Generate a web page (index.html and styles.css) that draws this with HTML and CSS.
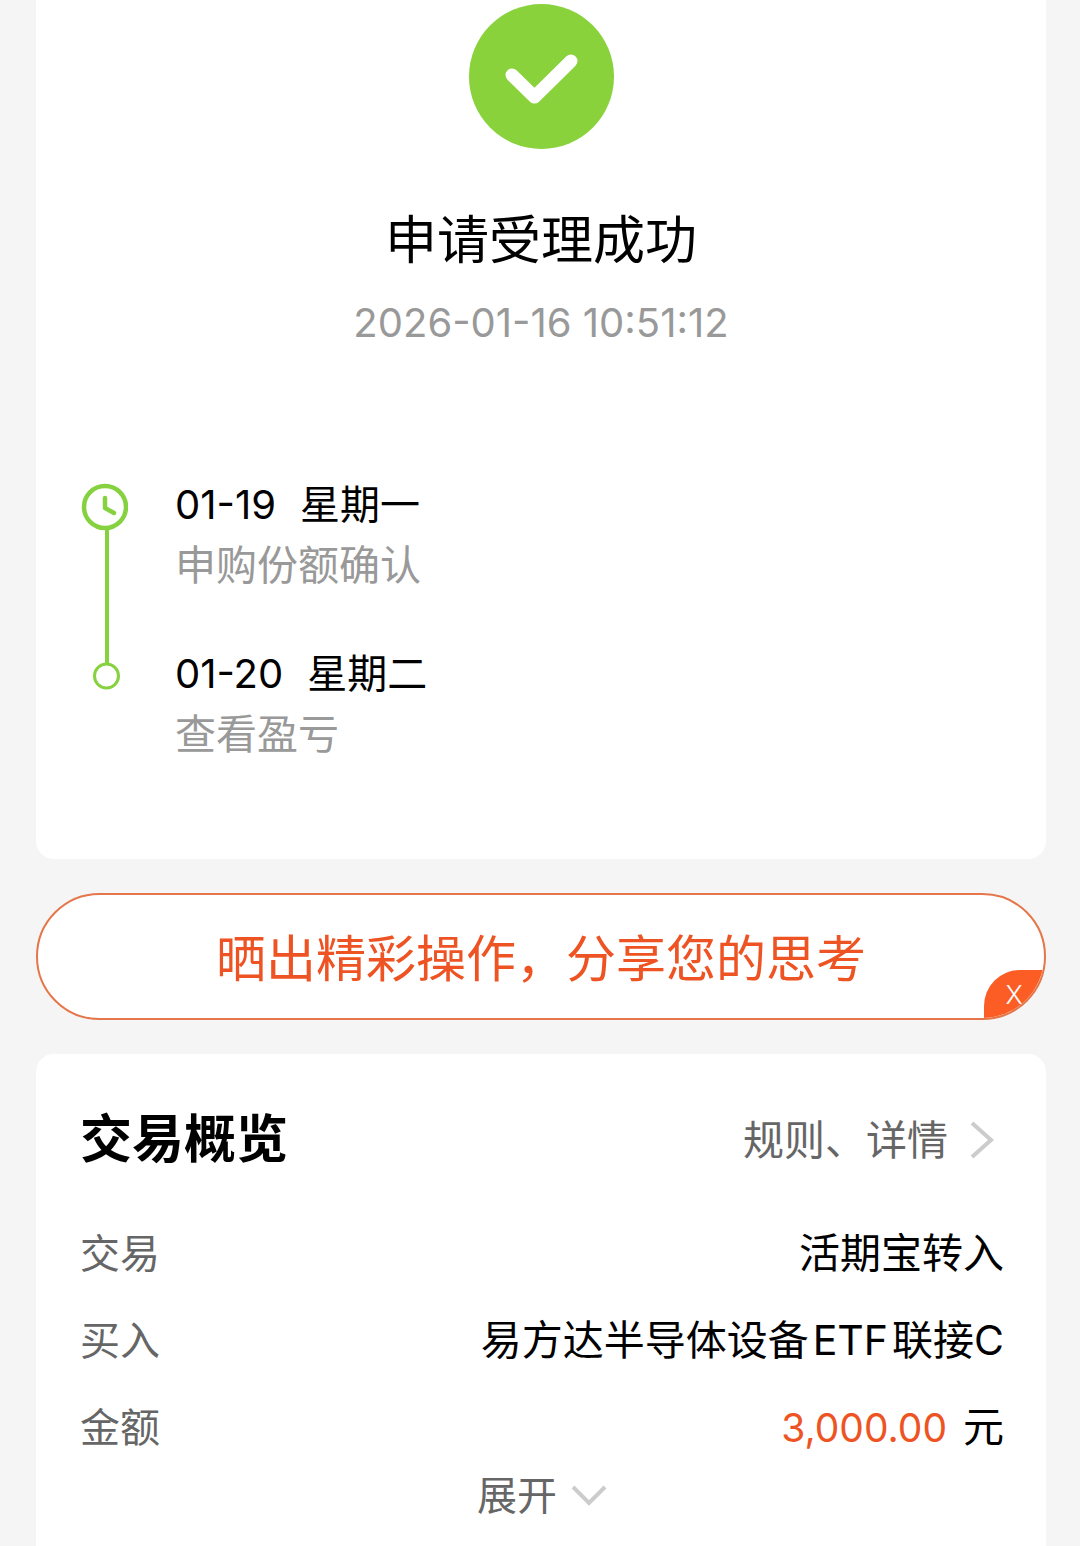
FILE: index.html
```html
<!DOCTYPE html>
<html lang="zh-CN">
<head>
    <meta charset="UTF-8">
    <meta name="viewport" content="width=device-width, initial-scale=1.0">
    <title>申请受理成功</title>
    <link rel="stylesheet" href="styles.css">
</head>
<body>
    <main class="page">
        <section class="card result">
            <svg class="result-icon" viewBox="0 0 145 145" aria-hidden="true">
                <circle cx="72.5" cy="72.5" r="72.5" fill="#89d23c"/>
                <path d="M43 71L65.500 93L102 57" fill="none" stroke="#fff" stroke-width="13" stroke-linecap="round" stroke-linejoin="round"/>
            </svg>
            <h1 class="result-title">申请受理成功</h1>
            <time class="result-time">2026-01-16 10:51:12</time>

            <div class="timeline">
                <svg class="timeline-rail" viewBox="0 0 48 208" fill="none" stroke="#86d13f" aria-hidden="true">
                    <path d="M27 46V180" stroke-width="4"/>
                    <circle cx="25" cy="24" r="21" stroke-width="4.500"/>
                    <path d="M25 15V25L34 30" stroke-width="4.500" stroke-linecap="round" stroke-linejoin="round"/>
                    <circle cx="26.500" cy="193" r="12" stroke-width="3"/>
                </svg>
                <ol class="timeline-list">
                    <li>
                        <p class="step-date"><span>01-19</span><span>星期一</span></p>
                        <p class="step-text">申购份额确认</p>
                    </li>
                    <li>
                        <p class="step-date"><span>01-20</span><span>星期二</span></p>
                        <p class="step-text">查看盈亏</p>
                    </li>
                </ol>
            </div>
        </section>

        <div class="share">
            <a class="share-link" href="#">晒出精彩操作，分享您的思考</a>
            <button class="share-close" type="button" aria-label="关闭">X</button>
        </div>

        <section class="card overview">
            <div class="overview-head">
                <h2 class="overview-title">交易概览</h2>
                <a class="overview-more" href="#">规则、详情
                    <svg width="24" height="40" viewBox="0 0 24 40" fill="none" stroke="#ccc" stroke-width="4" aria-hidden="true">
                        <path d="M2 3L21 20L2 37"/>
                    </svg>
                </a>
            </div>
            <dl class="details">
                <div class="row"><dt>交易</dt><dd>活期宝转入</dd></div>
                <div class="row"><dt>买入</dt><dd>易方达半导体设备<span class="latin">ETF</span>联接C</dd></div>
                <div class="row"><dt>金额</dt><dd class="amount"><span class="price">3,000.00</span><span>元</span></dd></div>
            </dl>
            <button class="expand" type="button">展开
                <svg width="36" height="24" viewBox="0 0 36 24" fill="none" stroke="#ccc" stroke-width="4" aria-hidden="true">
                    <path d="M2 3L18 19L34 3"/>
                </svg>
            </button>
        </section>
    </main>
</body>
</html>
```

FILE: styles.css
```css
* {
    box-sizing: border-box;
    margin: 0;
    padding: 0;
}
body {
    background: #f5f5f5;
    color: #000;
    font-family: Inter, "Noto Sans CJK SC", sans-serif;
    font-size: 41px;
    line-height: 61px;
}
a {
    text-decoration: none;
}
button {
    border: none;
    background: none;
    font-family: inherit;
    cursor: pointer;
}
.page {
    display: flex;
    flex-direction: column;
    gap: 34px;
    padding: 0 34px 0 36px;
}
.card {
    background: #fff;
    border-radius: 18px;
}

/* result */
.result {
    display: flex;
    flex-direction: column;
    align-items: center;
    padding: 4px 44px 94px;
    border-top-left-radius: 0;
    border-top-right-radius: 0;
}
.result-icon {
    width: 145px;
    height: 145px;
}
.result-title {
    margin-top: 56px;
    font-size: 52px;
    font-weight: 400;
    line-height: 72px;
}
.result-time {
    margin-top: 15px;
    color: #999;
    font-size: 40px;
}
.timeline {
    display: flex;
    align-self: stretch;
    gap: 47px;
    margin-top: 121px;
}
.timeline-rail {
    width: 48px;
    height: 208px;
    margin-top: 9px;
}
.timeline-list {
    display: flex;
    flex-direction: column;
    gap: 47px;
    list-style: none;
}
.step-date {
    display: flex;
    gap: 24px;
    font-size: 40px;
}
.step-text {
    color: #999;
}

/* share banner */
.share {
    position: relative;
    overflow: hidden;
    border: 2px solid #e5764a;
    border-radius: 64px;
    background: #fff;
    text-align: center;
}
.share-link {
    display: block;
    padding: 34px 0 28px;
    color: #ee5423;
    font-size: 50px;
}
.share-close {
    position: absolute;
    right: 0;
    bottom: 0;
    width: 60px;
    height: 48px;
    border-top-left-radius: 36px;
    background: #fb5d24;
    color: #fff;
    font-size: 26px;
    font-weight: 300;
}

/* overview */
.overview {
    padding: 46px 42px 20px 44px;
    border-bottom-left-radius: 0;
    border-bottom-right-radius: 0;
}
.overview-head {
    display: flex;
    align-items: center;
    justify-content: space-between;
    padding-right: 10px;
}
.overview-title {
    font-size: 52px;
    font-weight: 700;
    line-height: 80px;
}
.overview-more {
    display: flex;
    align-items: center;
    gap: 22px;
    color: #666;
}
.details {
    display: flex;
    flex-direction: column;
    gap: 26px;
    margin-top: 43px;
}
.row {
    display: flex;
    justify-content: space-between;
}
.row dt {
    color: #666;
    font-size: 40px;
}
.latin {
    margin: 0 4px;
}
.amount {
    display: flex;
    gap: 16px;
}
.price {
    color: #ee5423;
    font-size: 39px;
}
.expand {
    display: flex;
    align-items: center;
    gap: 14px;
    margin: 7px auto 0;
    color: #666;
    font-size: 40px;
    line-height: 61px;
}
```
